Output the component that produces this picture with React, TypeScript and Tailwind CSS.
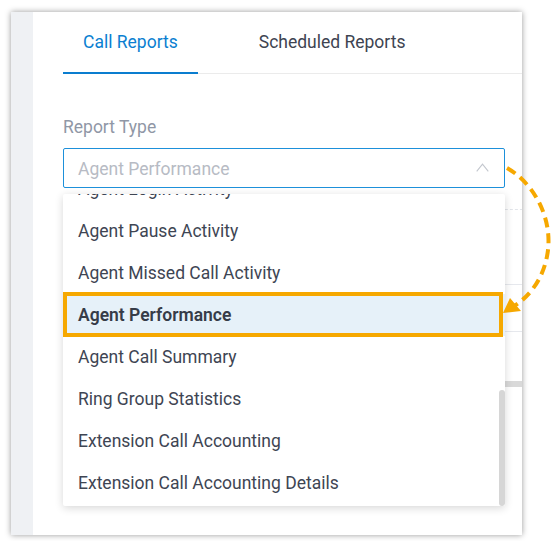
import React from "react";

const items = [
  "Agent Login Activity",
  "Agent Pause Activity",
  "Agent Missed Call Activity",
  "Agent Performance",
  "Agent Call Summary",
  "Ring Group Statistics",
  "Extension Call Accounting",
  "Extension Call Accounting Details",
];

export default function App() {
  return (
    <div
      className="relative w-[558px] h-[541px] bg-white overflow-hidden pl-[11px] pt-[12px]"
      style={{ fontFamily: "Roboto, 'Liberation Sans', sans-serif" }}
    >
      <div className="flex w-[511px] h-[523px] bg-white shadow-[0_0_6px_rgba(0,0,0,0.4)] overflow-hidden">
        <div className="w-[22px] shrink-0 bg-[#eff1f4]" />
        <div className="flex-1 pl-[30px] min-w-0">
          {/* tabs */}
          <div className="flex border-b border-[#ebebeb] -mr-[10px]">
            <div className="relative h-[61px] flex items-center px-5 mr-[41px] text-[17.5px] text-[#0b7fd1]">
              Call Reports
              <span className="absolute left-0 right-0 bottom-[-1px] h-[2px] bg-[#0a7dcf]" />
            </div>
            <div className="h-[61px] flex items-center px-5 text-[17.5px] text-[#3e4451]">
              Scheduled Reports
            </div>
          </div>

          <div className="w-[442px] mt-[41px]">
            <div className="h-[24px] leading-[24px] text-[17.5px] text-[#9097a6] mb-[9px]">Report Type</div>
            <div className="relative">
              <div className="h-[40px] border border-[#1d90da] rounded-[2px] flex items-center justify-between pl-[14px] pr-[15px]">
                <span className="text-[17.5px] text-[#b7bbc4] pt-[2px]">Agent Performance</span>
                <svg width="13" height="9" viewBox="0 0 13 9" className="mt-[-1px]">
                  <path d="M0.7 8.3 L6.5 1.2 L12.3 8.3" fill="none" stroke="#c3c7ce" strokeWidth="1.1" />
                </svg>
              </div>

              {/* underlying form content */}
              <div className="w-[480px]">
                <div className="mt-[21px] border-t border-dashed border-[#e2e5ea]" />
                <div className="mt-[74px] h-[48px] border border-[#e6e8ed]" />
                <div className="mt-[49px] h-[6px] bg-[#d9d9d9]" />
              </div>

              {/* dropdown */}
              <div className="absolute left-0 top-[46px] w-[442px] h-[312px] bg-white shadow-[0_2px_8px_rgba(0,0,0,0.16)] rounded-[2px] overflow-hidden">
                <div className="-mt-[26px]">
                  {items.map((t) => (
                    <div
                      key={t}
                      className={
                        t === "Agent Performance"
                          ? "h-[42px] flex items-center px-[15px] text-[17.5px] font-semibold text-[#363c48] bg-[#e6f1f9]"
                          : "h-[42px] flex items-center px-[15px] text-[17.5px] text-[#3e4553]"
                      }
                    >
                      {t}
                    </div>
                  ))}
                </div>
                <div className="absolute left-0 top-[98px] w-[440px] h-[45px] border-4 border-[#f6a800]" />
                <div className="absolute right-0 top-[196px] w-[6px] h-[116px] rounded-full bg-[#d6d6d6]" />
              </div>
            </div>
          </div>
        </div>
      </div>

      {/* annotation arrow */}
      <svg className="absolute left-0 top-0 pointer-events-none" width="558" height="541" viewBox="0 0 558 541">
        <path
          d="M507 168 C532 182 552 215 548 250 C545 275 532 295 514 306"
          fill="none"
          stroke="#f6a800"
          strokeWidth="4"
          strokeDasharray="10 6"
        />
        <polygon points="503,313 510,298 521,311" fill="#f6a800" />
      </svg>
    </div>
  );
}
